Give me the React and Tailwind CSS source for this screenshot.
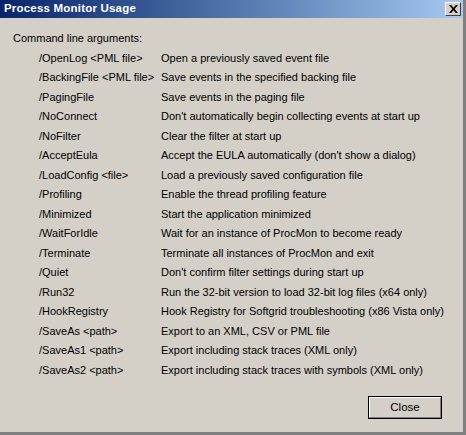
const rows = [
  ["/OpenLog <PML file>", "Open a previously saved event file"],
  ["/BackingFile <PML file>", "Save events in the specified backing file"],
  ["/PagingFile", "Save events in the paging file"],
  ["/NoConnect", "Don't automatically begin collecting events at start up"],
  ["/NoFilter", "Clear the filter at start up"],
  ["/AcceptEula", "Accept the EULA automatically (don't show a dialog)"],
  ["/LoadConfig <file>", "Load a previously saved configuration file"],
  ["/Profiling", "Enable the thread profiling feature"],
  ["/Minimized", "Start the application minimized"],
  ["/WaitForIdle", "Wait for an instance of ProcMon to become ready"],
  ["/Terminate", "Terminate all instances of ProcMon and exit"],
  ["/Quiet", "Don't confirm filter settings during start up"],
  ["/Run32", "Run the 32-bit version to load 32-bit log files (x64 only)"],
  ["/HookRegistry", "Hook Registry for Softgrid troubleshooting (x86 Vista only)"],
  ["/SaveAs <path>", "Export to an XML, CSV or PML file"],
  ["/SaveAs1 <path>", "Export including stack traces (XML only)"],
  ["/SaveAs2 <path>", "Export including stack traces with symbols (XML only)"],
];

export default function App() {
  return (
    <div
      className="w-[466px] h-[435px] flex flex-col bg-[#808080] text-[11px] text-black overflow-hidden"
      style={{ fontFamily: '"Liberation Sans", Arial, sans-serif' }}
    >
      <div className="flex flex-col w-[463px] h-[432px] bg-[#d4d0c8]">
        {/* title bar */}
        <div className="h-[18px] flex items-center justify-between bg-gradient-to-r from-[#0a246a] to-[#a6caf0] pl-[4px] pr-[2px]">
          <span className="text-white font-bold text-[11.5px] tracking-[0.2px]">Process Monitor Usage</span>
          <button className="w-[16px] h-[14px] bg-[#d4d0c8] border border-t-white border-l-white border-r-[#404040] border-b-[#404040] flex items-center justify-center">
            <svg width="9" height="8" viewBox="0 0 9 8">
              <path d="M0 0h2.2l2.3 2.8L6.8 0H9L5.6 4 9 8H6.8L4.5 5.2 2.2 8H0l3.4-4z" fill="#000" />
            </svg>
          </button>
        </div>

        {/* body */}
        <div className="flex-1 flex flex-col pl-[13px] pt-[11px]">
          <div className="leading-[18px]">Command line arguments:</div>
          <div className="flex flex-col pl-[26px] pt-[1px]">
            {rows.map(([arg, desc]) => (
              <div key={arg} className="flex h-[19.5px] items-center whitespace-nowrap">
                <span className="w-[122px] shrink-0">{arg}</span>
                <span>{desc}</span>
              </div>
            ))}
          </div>
          <div className="flex justify-end pr-[21px] mt-auto mb-[13px]">
            <button className="w-[74px] h-[23px] border border-black bg-[#d4d0c8]">
              <div className="w-full h-full border border-t-white border-l-white border-r-[#808080] border-b-[#808080] flex items-center justify-center text-[11.5px]">
                Close
              </div>
            </button>
          </div>
        </div>
      </div>
    </div>
  );
}
